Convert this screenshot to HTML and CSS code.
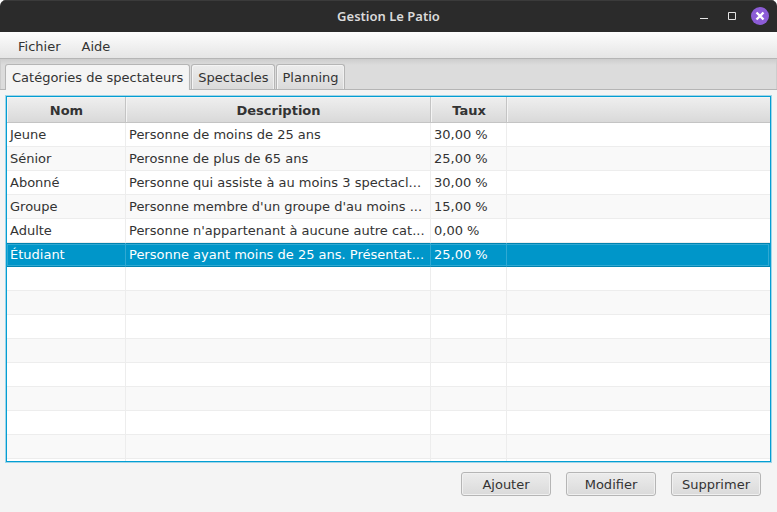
FILE: index.html
```html
<!DOCTYPE html>
<html lang="fr">
<head>
<meta charset="utf-8">
<title>Gestion Le Patio</title>
<link rel="stylesheet" href="styles.css">
</head>
<body>
<div class="window">
  <header class="titlebar">
    <h1 class="title">Gestion Le Patio</h1>
    <div class="controls">
      <button type="button" class="control" aria-label="Réduire"><svg width="18" height="18" viewBox="0 0 18 18"><path d="M5 11.5h8" stroke="#e4e4e4" fill="none"/></svg></button>
      <button type="button" class="control" aria-label="Agrandir"><svg width="18" height="18" viewBox="0 0 18 18"><path d="M5.500 5.500h7v7h-7z" stroke="#e4e4e4" fill="none"/></svg></button>
      <button type="button" class="control" aria-label="Fermer"><svg width="18" height="18" viewBox="0 0 18 18"><circle cx="9" cy="9" r="9" fill="#8c5cd6"/><path d="M5.500 5.500l7 7M12.500 5.500l-7 7" stroke="#fff" stroke-width="2.400" fill="none"/></svg></button>
    </div>
  </header>
  <nav class="menubar">
    <button type="button" class="menu">Fichier</button>
    <button type="button" class="menu">Aide</button>
  </nav>
  <div class="tabs" role="tablist">
    <button type="button" class="tab selected" role="tab" aria-selected="true">Catégories de spectateurs</button>
    <button type="button" class="tab" role="tab" aria-selected="false">Spectacles</button>
    <button type="button" class="tab" role="tab" aria-selected="false">Planning</button>
  </div>
  <main class="content">
    <div class="table-view">
      <table class="table">
        <colgroup><col class="col-name"><col class="col-desc"><col class="col-rate"><col></colgroup>
        <thead><tr><th>Nom</th><th>Description</th><th>Taux</th><th></th></tr></thead>
        <tbody>
          <tr><td>Jeune</td><td>Personne de moins de 25 ans</td><td>30,00 %</td><td></td></tr>
          <tr><td>Sénior</td><td>Perosnne de plus de 65 ans</td><td>25,00 %</td><td></td></tr>
          <tr><td>Abonné</td><td>Personne qui assiste à au moins 3 spectacl...</td><td>30,00 %</td><td></td></tr>
          <tr><td>Groupe</td><td>Personne membre d'un groupe d'au moins ...</td><td>15,00 %</td><td></td></tr>
          <tr><td>Adulte</td><td>Personne n'appartenant à aucune autre cat...</td><td>0,00 %</td><td></td></tr>
          <tr class="selected"><td>Étudiant</td><td>Personne ayant moins de 25 ans. Présentat...</td><td>25,00 %</td><td></td></tr>
          <tr><td></td><td></td><td></td><td></td></tr>
          <tr><td></td><td></td><td></td><td></td></tr>
          <tr><td></td><td></td><td></td><td></td></tr>
          <tr><td></td><td></td><td></td><td></td></tr>
          <tr><td></td><td></td><td></td><td></td></tr>
          <tr><td></td><td></td><td></td><td></td></tr>
          <tr><td></td><td></td><td></td><td></td></tr>
          <tr><td></td><td></td><td></td><td></td></tr>
          <tr><td></td><td></td><td></td><td></td></tr>
        </tbody>
      </table>
    </div>
    <div class="actions">
      <button type="button" class="button">Ajouter</button>
      <button type="button" class="button">Modifier</button>
      <button type="button" class="button">Supprimer</button>
    </div>
  </main>
</div>
</body>
</html>
```
FILE: styles.css
```css
* {
  box-sizing: border-box;
}

body {
  margin: 0;
  background: #fff;
  color: #333;
  font: 13px/16px "DejaVu Sans", sans-serif;
}

button {
  margin: 0;
  padding: 0;
  border: 0;
  background: none;
  color: inherit;
  font: inherit;
}

.window {
  display: flex;
  flex-direction: column;
  height: 100vh;
  overflow: hidden;
  border-radius: 6px 6px 0 0;
  background: #f4f4f4;
}

.titlebar {
  display: grid;
  grid-template-columns: 1fr auto 1fr;
  align-items: center;
  flex: none;
  height: 32px;
  padding: 0 8px;
  background: #2b2b2b;
  box-shadow: inset 0 1px #3b3b3b;
}

.title {
  grid-column: 2;
  margin: 0;
  color: #dadada;
  font: 600 13px/16px "Noto Sans", "Open Sans", sans-serif;
}

.controls {
  display: flex;
  justify-content: flex-end;
  gap: 10px;
}

.control,
.control svg {
  display: block;
  width: 18px;
  height: 18px;
}

.menubar {
  display: flex;
  align-items: center;
  flex: none;
  gap: 21px;
  height: 27px;
  padding: 4px 18px 0;
  border-bottom: 1px solid #b5b5b5;
  background: linear-gradient(#fdfdfd, #e5e5e5);
}

.tabs {
  display: flex;
  align-items: flex-end;
  flex: none;
  gap: 1px;
  height: 31px;
  padding: 0 5px;
  border-bottom: 1px solid #b5b5b5;
  background: linear-gradient(#cdcdcd, #dcdcdc 6px);
  box-shadow: inset 1px 0 #cdcdcd, inset -1px 0 #cdcdcd;
}

.tab {
  height: 25px;
  padding: 2px 5px 0 6px;
  border: 1px solid #b5b5b5;
  border-bottom: 0;
  border-radius: 3px 3px 0 0;
  background: linear-gradient(#ececec, #dadada);
  box-shadow: inset 1px 1px #f4f4f4, inset -1px 0 #f0f0f0;
}

.tab.selected {
  height: 26px;
  margin-bottom: -1px;
  padding: 1px 6px 0;
  background: #f4f4f4;
}

.content {
  display: flex;
  flex: 1;
  flex-direction: column;
  min-height: 0;
  padding: 6px 6px 16px;
}

.table-view {
  flex: 1;
  min-height: 0;
  overflow: hidden;
  border: 1px solid #039ed3;
  box-shadow: 0 0 0 1px #9fd5e8;
  background: #fff;
}

.table {
  width: 100%;
  border-collapse: separate;
  border-spacing: 0;
  table-layout: fixed;
}

.col-name {
  width: 119px;
}

.col-desc {
  width: 305px;
}

.col-rate {
  width: 76px;
}

.table th {
  height: 26px;
  padding: 3px 0 0 1px;
  border: solid #c4c4c4;
  border-width: 0 1px 1px 0;
  background: linear-gradient(#efefef, #d9d9d9);
  box-shadow: inset 1px 1px #f4f4f4;
}

.table td {
  height: 24px;
  padding: 0 3px;
  border: solid #ededed;
  border-width: 0 1px 1px 0;
  overflow: hidden;
  white-space: nowrap;
}

.table th:last-child,
.table td:last-child {
  border-right: 0;
}

.table tbody tr:nth-child(even) {
  background: #f9f9f9;
}

.table tbody tr.selected {
  background: #0096c9;
  color: #fff;
}

.table tr.selected td {
  border-right-color: #30a9d3;
  border-bottom-color: #0083b0;
  box-shadow: inset 0 1px #0083b0, inset 0 2px #30a9d3, inset 0 -1px #30a9d3;
}

.table tr.selected td:first-child {
  box-shadow: inset 0 1px #0083b0, inset 1px 2px #30a9d3, inset 0 -1px #30a9d3;
}

.table tr.selected td:last-child {
  box-shadow: inset 0 1px #0083b0, inset -1px 0 #0096c9, inset -2px 2px #30a9d3, inset 0 -1px #30a9d3;
}

.actions {
  display: flex;
  flex: none;
  justify-content: flex-end;
  gap: 15px;
  padding: 10px 10px 0 0;
}

.button {
  width: 90px;
  height: 24px;
  padding-top: 2px;
  border: 1px solid #b5b5b5;
  border-radius: 3px;
  background: linear-gradient(#ececec, #dadada);
  box-shadow: inset 0 0 0 1px #f0f0f0;
}
```
